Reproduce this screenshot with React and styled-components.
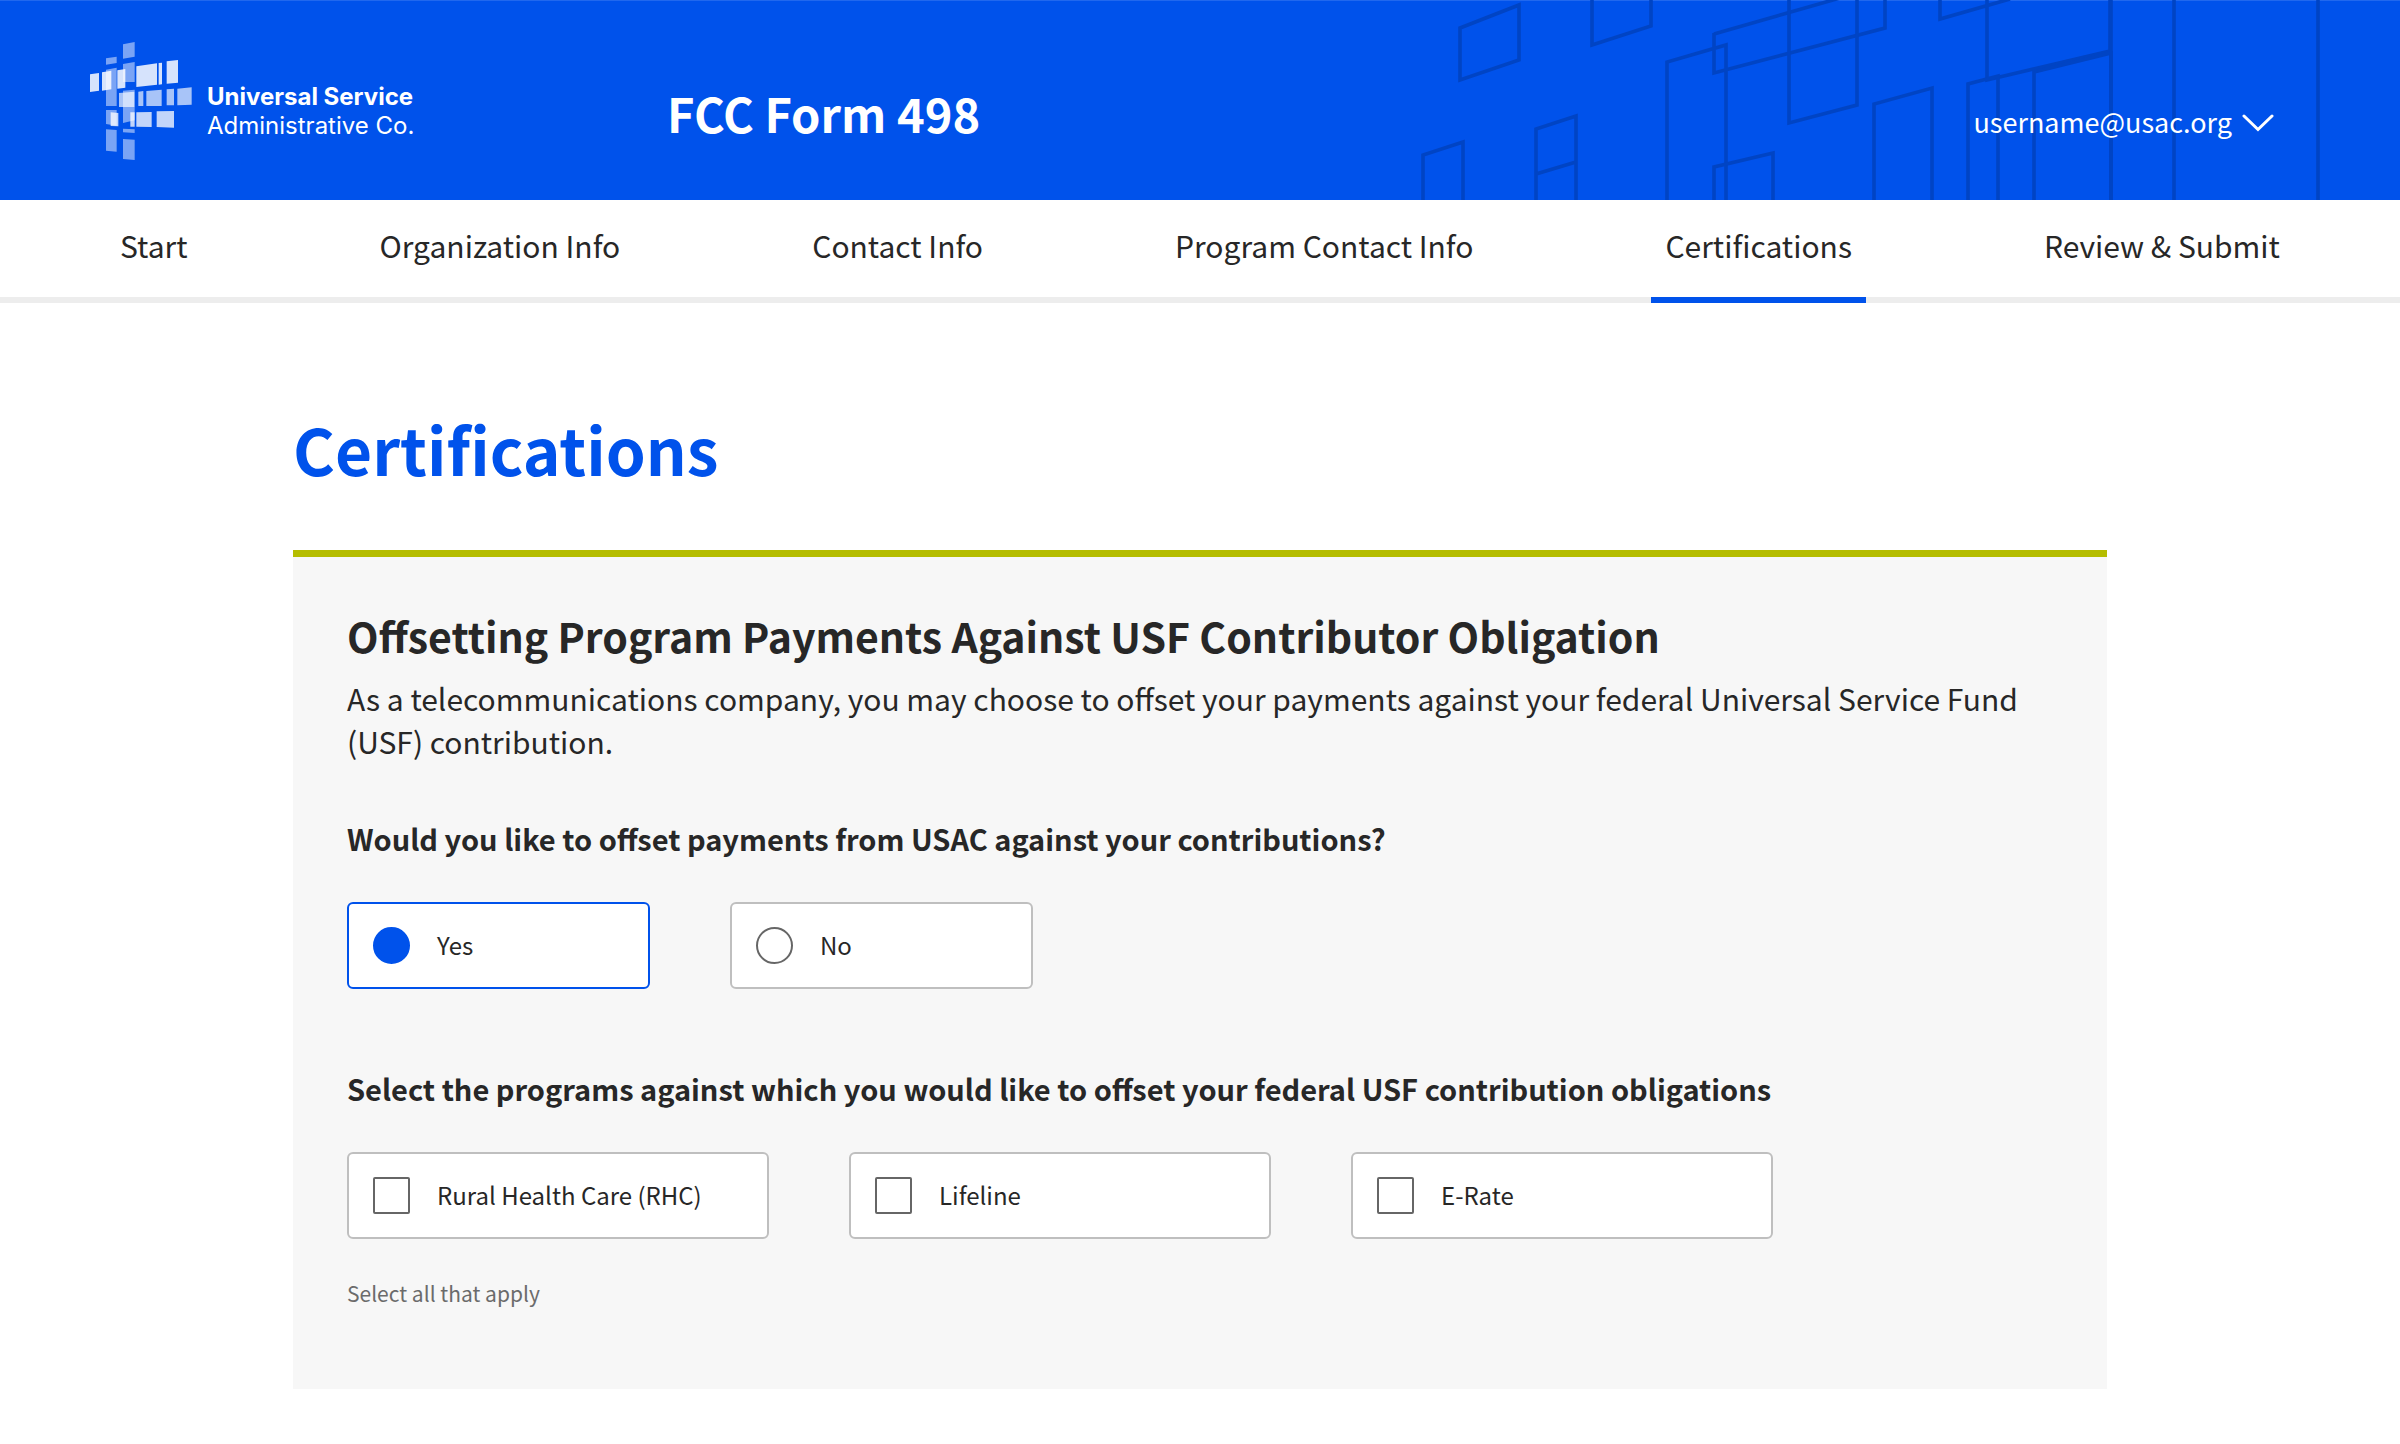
import React, { useState } from "react";
import styled, { createGlobalStyle } from "styled-components";

const sans = '"Noto Sans CJK SC", "Noto Sans", sans-serif';
const blue = "#0052eb";
const ink = "#272727";

const GlobalStyle = createGlobalStyle`
  *, *::before, *::after { box-sizing: border-box; }
  body { margin: 0; background: #fff; color: ${ink}; font-family: ${sans}; }
  button, input { font: inherit; margin: 0; }
`;

const Header = styled.header`
  position: relative;
  display: flex;
  align-items: center;
  height: 200px;
  padding: 0 126px 0 90px;
  background: ${blue};
  border-top: 1px solid #2168ee;
  color: #fff;
`;

const Pattern = styled.svg`
  position: absolute;
  right: 0;
  bottom: 0;
  width: 1000px;
  height: 200px;
`;

const Brand = styled.a`
  display: flex;
  align-items: center;
  flex: 0 0 577px;
  gap: 15px;
  color: inherit;
  text-decoration: none;
`;

const BrandName = styled.span`
  display: flex;
  flex-direction: column;
  padding-top: 20px;
  font-family: Inter, sans-serif;
  font-size: 24px;
  line-height: 29px;
`;

const HeaderText = styled.div`
  position: relative;
  display: flex;
  flex: 1;
  align-items: baseline;
  justify-content: space-between;
  padding-top: 24px;
`;

const FormName = styled.div`
  font-size: 47px;
  font-weight: 700;
  line-height: 58px;
`;

const Account = styled.button`
  display: flex;
  align-items: center;
  gap: 10px;
  padding: 0;
  border: 0;
  background: none;
  color: inherit;
  font-size: 27px;
  line-height: 40px;
  cursor: pointer;
`;

const Steps = styled.nav`
  display: flex;
  justify-content: space-between;
  padding: 0 106px;
  box-shadow: inset 0 -6px #ededed;
`;

const Step = styled.a`
  padding: 24px 14px 31px;
  border-bottom: 6px solid ${(p) => (p.$current ? blue : "transparent")};
  color: inherit;
  font-size: 30px;
  line-height: 42px;
  text-decoration: none;
`;

const Main = styled.main`
  max-width: 1814px;
  margin: 0 auto;
  padding: 105px 0 54px;
`;

const Title = styled.h1`
  margin: 0 0 62px;
  color: ${blue};
  font-size: 64px;
  font-weight: 700;
  line-height: 80px;
`;

const Panel = styled.section`
  padding: 50px 54px 80px;
  border-top: 7px solid #b5bd00;
  background: #f7f7f7;
`;

const PanelTitle = styled.h2`
  margin: 0 0 14px;
  font-size: 41px;
  font-weight: 700;
  line-height: 56px;
`;

const Intro = styled.p`
  margin: 0 0 54px;
  font-size: 30px;
  line-height: 43px;
`;

const Question = styled.fieldset`
  min-width: 0;
  margin: 0 0 78px;
  padding: 0;
  border: 0;

  &:last-child { margin: 0; }
`;

const Legend = styled.legend`
  margin: 0 0 43px;
  padding: 0;
  font-size: 29px;
  font-weight: 700;
  line-height: 42px;
`;

const Choices = styled.div`
  display: flex;
  flex-wrap: wrap;
  gap: 80px;
`;

const Choice = styled.label`
  display: flex;
  align-items: center;
  gap: 27px;
  width: ${(p) => (p.$wide ? 422 : 303)}px;
  height: 87px;
  padding: 0 24px 1px;
  border: 2px solid ${(p) => (p.$on ? blue : "#bfbfbf")};
  border-radius: 6px;
  background: #fff;
  font-size: 24px;
  line-height: 34px;
  cursor: pointer;
`;

const Radio = styled.input.attrs({ type: "radio" })`
  appearance: none;
  width: 37px;
  height: 37px;
  border: 2px solid #666;
  border-radius: 50%;
  background: #fff;

  &:checked { border-color: ${blue}; background: ${blue}; }
`;

const Check = styled.input.attrs({ type: "checkbox" })`
  appearance: none;
  width: 37px;
  height: 37px;
  border: 2px solid #666;
  border-radius: 2px;
  background: #fff;

  &:checked { border-color: ${blue}; background: ${blue}; }
`;

const Hint = styled.p`
  margin: 38px 0 0;
  color: #6b6b6b;
  font-size: 21px;
  line-height: 32px;
`;

function LogoMark() {
  return (
    <svg width="102" height="118" viewBox="90 66 306 354" aria-hidden="true">
      <g fill="#fff" fillOpacity=".48">
        <path d="M189 73l35-7v44l-35 6zM138 115l32-5v19l-32 5zM138 149l32-6v115h-32zM189 132l35-6v60h-35zM189 212l35-3v92l-35 8zM138 270h32v47l-32-5zM138 328l32 2v65l-32-3zM189 326l35 2v11l-35-2zM189 357l35 2v61l-35-3z" />
      </g>
      <g fill="#fff" fillOpacity=".84">
        <path d="M90 163l27-4v53l-27 4zM126 157l28-5v56l-28 4zM172 151l24-4v56l-24 3zM229 139l62-9v64l-62 7zM296 129l10-1v65l-10 1zM320 124l34-4v68l-34 3z" />
      </g>
      <g fill="#fff" fillOpacity=".66">
        <path d="M177 219l46-4v46h-46zM235 215l15-2v45h-15zM259 213l46-4v49h-46zM320 208l22-2v50h-22zM352 206l43-4v52l-43 2z" />
      </g>
      <g fill="#fff" fillOpacity=".76">
        <path d="M152 277l23 2v40l-23-1zM211 277h13v43h-13zM229 277l46-1v45l-46-1zM290 274l52-1v50l-52-2z" />
      </g>
    </svg>
  );
}

function HeaderPattern() {
  return (
    <Pattern viewBox="0 0 1000 200" aria-hidden="true">
      <g fill="none" stroke="#0044c4" strokeWidth="3.6">
        <path d="M60 28L119 5V60L60 80ZM192-10V45L251 26V-10" />
        <path d="M23 210V155L63 142V210M136 210V129L176 116V210M136 174L176 162" />
        <path d="M267 210V62L326 45V210M314 34L440-2M314 33V73L485 28V-10" />
        <path d="M389-10V123L457 105V-10M314 210V167L373 153V210" />
        <path d="M474 210V104L532 88V210M540-10V19L610-1M587-10V80L710 51V-10" />
        <path d="M568 210V84L598 76V210M634 210V72L711 53V210" />
        <path d="M711-10V210M774-10V210M918-10V210" />
      </g>
    </Pattern>
  );
}

const steps = ["Start", "Organization Info", "Contact Info", "Program Contact Info", "Certifications", "Review & Submit"];
const programs = ["Rural Health Care (RHC)", "Lifeline", "E-Rate"];

export default function App() {
  const [offset, setOffset] = useState("Yes");
  const [picked, setPicked] = useState([]);
  const toggle = (name) =>
    setPicked((list) => (list.includes(name) ? list.filter((n) => n !== name) : [...list, name]));

  return (
    <>
      <GlobalStyle />
      <Header>
        <HeaderPattern />
        <Brand href="#home">
          <LogoMark />
          <BrandName>
            <strong>Universal Service</strong>
            <span>Administrative Co.</span>
          </BrandName>
        </Brand>
        <HeaderText>
          <FormName>FCC Form 498</FormName>
          <Account type="button">
            username@usac.org
            <svg width="32" height="20" viewBox="0 0 32 20" fill="none" stroke="currentColor" strokeWidth="3" strokeLinecap="round" aria-hidden="true">
              <path d="M2 4L16 17.5L30 4" />
            </svg>
          </Account>
        </HeaderText>
      </Header>
      <Steps aria-label="Form steps">
        {steps.map((name) => (
          <Step key={name} href="#step" $current={name === "Certifications"} aria-current={name === "Certifications" ? "step" : undefined}>
            {name}
          </Step>
        ))}
      </Steps>
      <Main>
        <Title>Certifications</Title>
        <Panel>
          <PanelTitle>Offsetting Program Payments Against USF Contributor Obligation</PanelTitle>
          <Intro>
            As a telecommunications company, you may choose to offset your payments against your federal Universal
            Service Fund (USF) contribution.
          </Intro>
          <Question>
            <Legend>Would you like to offset payments from USAC against your contributions?</Legend>
            <Choices>
              {["Yes", "No"].map((value) => (
                <Choice key={value} $on={offset === value}>
                  <Radio name="offset" value={value} checked={offset === value} onChange={() => setOffset(value)} />
                  {value}
                </Choice>
              ))}
            </Choices>
          </Question>
          <Question>
            <Legend>Select the programs against which you would like to offset your federal USF contribution obligations</Legend>
            <Choices>
              {programs.map((name) => (
                <Choice key={name} $wide $on={picked.includes(name)}>
                  <Check checked={picked.includes(name)} onChange={() => toggle(name)} />
                  {name}
                </Choice>
              ))}
            </Choices>
            <Hint>Select all that apply</Hint>
          </Question>
        </Panel>
      </Main>
    </>
  );
}
